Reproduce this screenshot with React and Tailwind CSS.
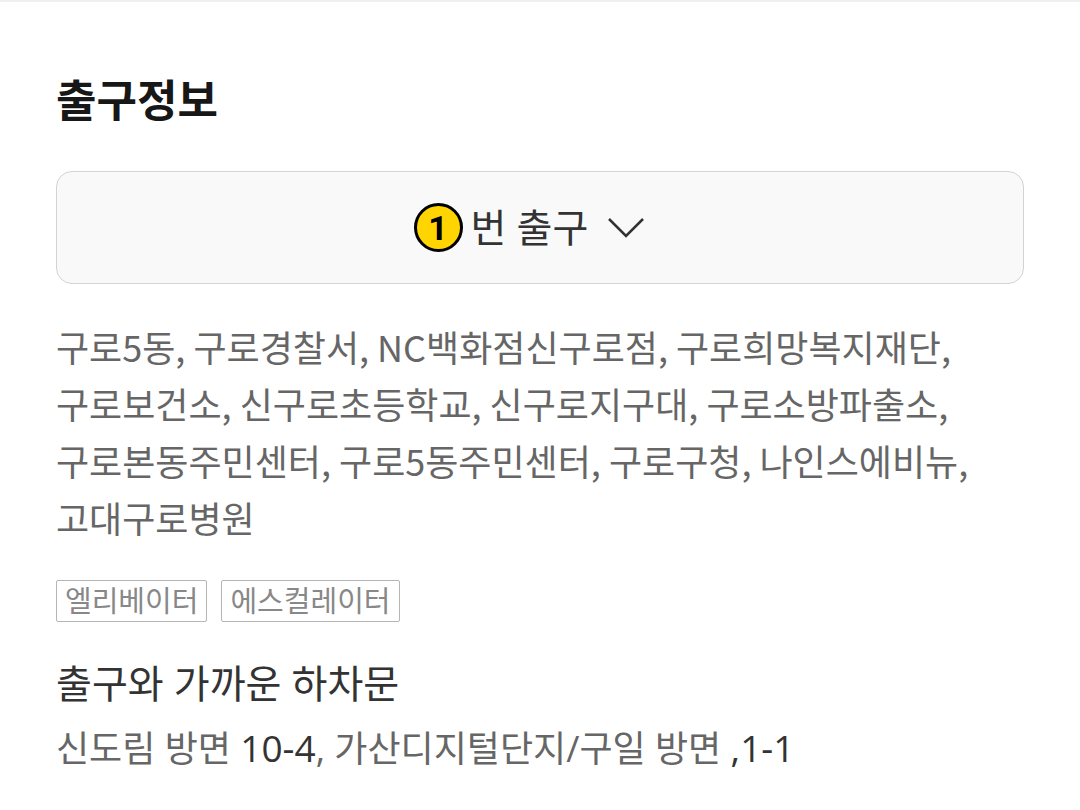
import React from "react";

const places = [
  "구로5동",
  "구로경찰서",
  "NC백화점신구로점",
  "구로희망복지재단",
  "구로보건소",
  "신구로초등학교",
  "신구로지구대",
  "구로소방파출소",
  "구로본동주민센터",
  "구로5동주민센터",
  "구로구청",
  "나인스에비뉴",
  "고대구로병원",
];

const facilities = ["엘리베이터", "에스컬레이터"];

const ExitButton = ({ number }) => (
  <button
    type="button"
    className="w-full h-[113px] flex items-center justify-center rounded-2xl border border-[#d3d3d3] bg-[#f9f9f9] text-[39px] text-[#333] pr-[22px]"
  >
    <span className="flex items-center justify-center size-[49px] mr-2 rounded-full border-3 border-black bg-[#ffd400] font-['Roboto',sans-serif] text-[34px] leading-none font-bold text-black">
      {number}
    </span>
    <span>번 출구</span>
    <svg className="ml-5 w-9 h-5" viewBox="0 0 36 20" fill="none" stroke="#333" strokeWidth="2.5">
      <path d="M1 1L18 18L35 1" />
    </svg>
  </button>
);

const App = () => {
  return (
    <main className="border-t-2 border-[#efefef] bg-white px-14 pt-16 pb-8 font-['Open_Sans','Noto_Sans_CJK_KR',sans-serif]">
      <h2 className="pt-0.5 mb-[38px] text-[44px] leading-[65px] font-bold text-[#171717]">출구정보</h2>
      <ExitButton number={1} />
      <p className="mt-[34px] mb-[34px] font-['Noto_Sans_CJK_KR',sans-serif] text-[36px] leading-[57px] text-[#666] break-keep">
        {places.join(", ")}
      </p>
      <ul className="flex gap-3.5">
        {facilities.map((name) => (
          <li key={name} className="h-[42px] px-2 border border-[#b5b5b5] rounded-xs text-[29px] leading-10 text-[#888]">
            {name}
          </li>
        ))}
      </ul>
      <h3 className="mt-8 text-[39px] leading-[57px] text-[#333]">출구와 가까운 하차문</h3>
      <p className="mt-2 text-[36px] leading-[57px] text-[#666]">
        신도림 방면 <span className="text-[37px] text-[#333]">10-4</span>, 가산디지털단지/구일 방면{" "}
        <span className="text-[37px] text-[#333]">,1-1</span>
      </p>
    </main>
  );
};

export default App;
